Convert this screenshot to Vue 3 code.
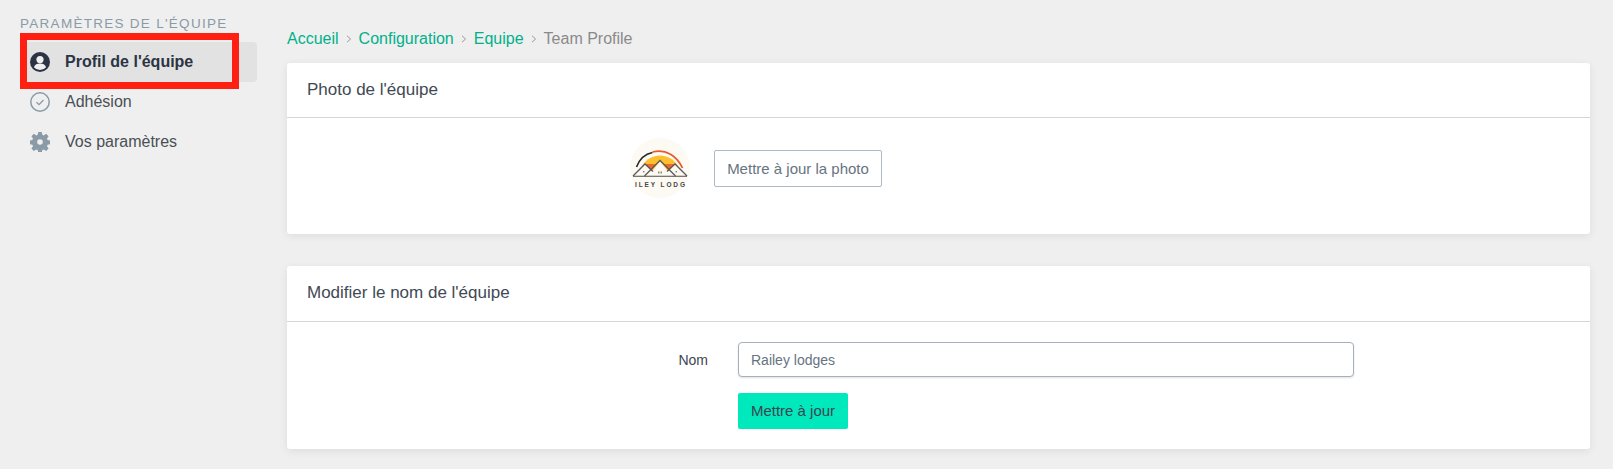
<template>
  <div class="page">
    <aside class="sidebar">
      <h4 class="side-title">PARAMÈTRES DE L'ÉQUIPE</h4>
      <ul class="side-list">
        <li class="side-item active">
          <svg class="side-icon" viewBox="0 0 20 20">
            <circle cx="10" cy="10" r="10" fill="#2c3444" />
            <circle cx="10" cy="7.6" r="3.6" fill="#efefef" />
            <path d="M3.9 15.2c1-2.6 3.2-3.7 6.1-3.7s5.100 1.100 6.100 3.700a8 8 0 0 1-12.200 0z" fill="#efefef" />
          </svg>
          <span>Profil de l'équipe</span>
        </li>
        <li class="side-item">
          <svg class="side-icon" viewBox="0 0 20 20" fill="none" stroke="#8a9aa6">
            <circle cx="10" cy="10" r="9.200" stroke-width="1.500" />
            <path d="M6.500 10.300l2.500 2.400 4.500-4.700" stroke-width="1.300" />
          </svg>
          <span>Adhésion</span>
        </li>
        <li class="side-item">
          <svg class="side-icon" viewBox="0 0 20 20">
            <path fill="#8a9aa6" fill-rule="evenodd" d="M8.200 0h3.600l.5 2.800 1.500.6 2.300-1.600 2.500 2.500-1.600 2.300.6 1.500 2.800.5v3.600l-2.800.5-.6 1.500 1.600 2.300-2.500 2.500-2.300-1.600-1.500.6-.5 2.800H8.200l-.5-2.800-1.500-.6-2.300 1.600-2.500-2.500 1.600-2.300-.6-1.500-2.800-.5V8.600l2.800-.5.6-1.500-1.600-2.300 2.500-2.500 2.300 1.600 1.500-.6zM10 7.200a2.800 2.800 0 1 0 0 5.600 2.800 2.800 0 0 0 0-5.600z" />
          </svg>
          <span>Vos paramètres</span>
        </li>
      </ul>
      <div class="highlight"></div>
    </aside>

    <main class="content">
      <nav class="crumbs">
        <template v-for="(c, i) in crumbs" :key="c">
          <a v-if="i < crumbs.length - 1" class="crumb-link">{{ c }}</a>
          <span v-else class="crumb-last">{{ c }}</span>
          <svg v-if="i < crumbs.length - 1" class="crumb-sep" viewBox="0 0 6 8" fill="none" stroke="#999">
            <path d="M1 .8L4.600 4 1 7.200" />
          </svg>
        </template>
      </nav>

      <section class="card photo-card">
        <header class="card-head">Photo de l'équipe</header>
        <div class="photo-body">
          <svg class="logo" viewBox="0 0 60 60">
            <circle cx="30" cy="30" r="30" fill="#fdfaf3" />
            <path d="M12 28C16 21 23 17.500 30 17.500S44 21 48 28L30 36z" fill="#fcbf2e" />
            <path d="M6.500 29C9.500 21 15 16 22.500 14.500" fill="none" stroke="#2b2724" stroke-width="1.600" />
            <path d="M22.500 14C36 10.500 47 18 52.500 30" fill="none" stroke="#e85a28" stroke-width="1.800" />
            <path d="M15 26h10.500l-4.800 8zM34.500 26H45l-5.300 8z" fill="#ee6a2b" />
            <path d="M3 38l12-12 7 7.500L30 23l8 10.500L45 26l12 12z" fill="#fdfaf3" />
            <path d="M3 38l12-12 8 7.500M57 38L45 26l-8 7.500M14.500 38L30 22.500 45.500 38" fill="none" stroke="#5c5957" stroke-width="1.300" />
            <path d="M3 38.200h54" stroke="#4f4c4a" stroke-width="1.100" />
            <path d="M28 33.500h1.500v2H28zm2.500 0H32v2h-1.500zM13 33h1.500v1.500H13zM45.500 33H47v1.500h-1.500z" fill="#8a8785" />
            <text x="5" y="49" class="logo-text" textLength="50">ILEY LODG</text>
          </svg>
          <button class="btn-outline" type="button">Mettre à jour la photo</button>
        </div>
      </section>

      <section class="card name-card">
        <header class="card-head second">Modifier le nom de l'équipe</header>
        <form class="name-form" @submit.prevent>
          <label class="name-label" for="teamName">Nom</label>
          <input id="teamName" v-model="teamName" class="name-input" type="text" />
          <button class="btn-primary" type="submit">Mettre à jour</button>
        </form>
      </section>
    </main>
  </div>
</template>

<script setup>
import { ref } from 'vue'

const crumbs = ['Accueil', 'Configuration', 'Equipe', 'Team Profile']
const teamName = ref('Railey lodges')
</script>

<style>
html,
body {
  background: #efefef;
}
</style>

<style scoped>
.page {
  display: flex;
  min-height: 469px;
  background: #efefef;
  font-family: "Liberation Sans", Arial, sans-serif;
  font-size: 16px;
  color: #3b4550;
}
.sidebar {
  position: relative;
  box-sizing: border-box;
  width: 287px;
  flex: none;
  padding: 16px 30px 0 20px;
}
.side-title {
  margin: 0 0 10px;
  height: 16px;
  line-height: 16px;
  font-size: 13.500px;
  font-weight: 400;
  letter-spacing: 1.280px;
  color: #8a9aa6;
  white-space: nowrap;
}
.side-list {
  margin: 0;
  padding: 0;
  list-style: none;
}
.side-item {
  display: flex;
  align-items: center;
  gap: 15px;
  height: 40px;
  padding-left: 10px;
  border-radius: 4px;
  color: #4a4f55;
}
.side-item.active {
  background: #e2e2e2;
  color: #2c3444;
  font-weight: 700;
}
.side-icon {
  width: 20px;
  height: 20px;
  flex: none;
}
/* annotation drawn over the screenshot */
.highlight {
  position: absolute;
  left: 20px;
  top: 33px;
  box-sizing: border-box;
  width: 219px;
  height: 56px;
  border: 7px solid #ff2011;
}
.content {
  flex: 1;
  min-width: 0;
  padding: 28px 23px 0 0;
}
.crumbs {
  display: flex;
  align-items: center;
  height: 22px;
  margin-bottom: 13px;
}
.crumb-link {
  color: #00b18b;
}
.crumb-last {
  color: #8a8a8a;
}
.crumb-sep {
  width: 6px;
  height: 8px;
  margin: 0 7px;
}
.card {
  background: #fff;
  border-radius: 3px;
  box-shadow: 0 2px 8px rgba(0, 0, 0, 0.08);
}
.card-head {
  box-sizing: border-box;
  height: 55px;
  padding: 0 20px;
  line-height: 53px;
  font-size: 17px;
  color: #3f4a54;
  border-bottom: 1px solid #d6d6d6;
}
.card-head.second {
  height: 56px;
  line-height: 54px;
}
.photo-card {
  height: 171px;
  margin-bottom: 32px;
}
.photo-body {
  display: flex;
  align-items: center;
  gap: 24px;
  padding: 20px 0 0 343px;
}
.logo {
  width: 60px;
  height: 60px;
  flex: none;
}
.logo-text {
  font-size: 6.500px;
  font-weight: 700;
  fill: #4a4643;
}
.btn-outline {
  box-sizing: border-box;
  width: 168px;
  height: 37px;
  padding: 0;
  background: #fff;
  border: 1px solid #aeb8c0;
  border-radius: 2px;
  font: inherit;
  font-size: 15px;
  color: #66747f;
}
.name-card {
  height: 183px;
}
.name-form {
  display: grid;
  grid-template-columns: 421px 616px;
  column-gap: 30px;
  row-gap: 16px;
  padding-top: 20px;
  align-items: center;
}
.name-label {
  justify-self: end;
  font-size: 14px;
  color: #3b4550;
}
.name-input {
  box-sizing: border-box;
  width: 100%;
  height: 35px;
  padding: 0 12px;
  border: 1px solid #a7b0b8;
  border-radius: 4px;
  box-shadow: 0 1px 2px rgba(0, 0, 0, 0.12);
  font: inherit;
  font-size: 14px;
  color: #66747f;
  outline: none;
}
.btn-primary {
  grid-column: 2;
  justify-self: start;
  box-sizing: border-box;
  width: 110px;
  height: 36px;
  padding: 0 0 2px;
  background: #00e9bd;
  border: none;
  border-radius: 2px;
  font: inherit;
  font-size: 15px;
  color: #3b4550;
}
</style>
